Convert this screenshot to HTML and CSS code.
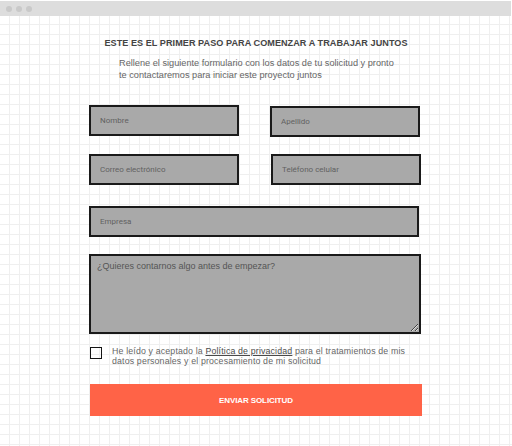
FILE: index.html
```html
<!DOCTYPE html>
<html lang="es">
<head>
<meta charset="utf-8">
<title>Formulario</title>
<link rel="stylesheet" href="styles.css">
</head>
<body>
<div class="window">
  <div class="titlebar">
    <span class="dot"></span><span class="dot"></span><span class="dot"></span>
  </div>
  <main class="content">
    <h1 class="title">ESTE ES EL PRIMER PASO PARA COMENZAR A TRABAJAR JUNTOS</h1>
    <p class="intro">Rellene el siguiente formulario con los datos de tu solicitud y pronto<br>te contactaremos para iniciar este proyecto juntos</p>
    <form class="form">
      <div class="pair">
        <input class="field" type="text" placeholder="Nombre">
        <input class="field field-low" type="text" placeholder="Apellido">
      </div>
      <div class="pair pair-second">
        <input class="field" type="email" placeholder="Correo electrónico">
        <input class="field" type="tel" placeholder="Teléfono celular">
      </div>
      <input class="field field-wide" type="text" placeholder="Empresa">
      <textarea class="message" placeholder="¿Quieres contarnos algo antes de empezar?"></textarea>
      <label class="consent">
        <span class="box"></span>
        <span class="consent-text">He leído y aceptado la <a class="policy" href="#">Política de privacidad</a> para el tratamientos de mis datos personales y el procesamiento de mi solicitud</span>
      </label>
      <button class="submit" type="button">ENVIAR SOLICITUD</button>
    </form>
  </main>
</div>
</body>
</html>
```

FILE: styles.css
```css
html, body {
  margin: 0;
  padding: 0;
  background: #fff;
}

.window {
  width: 512px;
  height: 446px;
  display: flex;
  flex-direction: column;
  overflow: hidden;
  font-family: "Liberation Sans", Arial, sans-serif;
}

.titlebar {
  height: 15px;
  margin-top: 1px;
  margin-right: 1px;
  background: #dddddd;
  display: flex;
  align-items: center;
  gap: 4px;
  padding-left: 6px;
  flex-shrink: 0;
}

.dot {
  width: 6px;
  height: 6px;
  border-radius: 50%;
  background: #c9c9c9;
}

.content {
  flex: 1;
  padding-top: 21px;
  background-color: #fff;
  background-image:
    linear-gradient(to right, #efefef 1px, transparent 1px),
    linear-gradient(to bottom, #efefef 1px, transparent 1px);
  background-size: 10px 10px;
  background-position: 9px 8px;
}

.title {
  margin: 0;
  font-size: 9.1px;
  line-height: 12px;
  font-weight: bold;
  color: #444;
  text-align: center;
  letter-spacing: 0.05px;
}

.intro {
  margin: 8px 0 0 119px;
  font-size: 9.2px;
  line-height: 12px;
  color: #666;
}

.form {
  margin: 24px 0 0 89px;
  width: 332px;
  display: flex;
  flex-direction: column;
}

.pair {
  display: flex;
  justify-content: space-between;
  align-items: flex-start;
}

.pair-second {
  margin-top: 17px;
}

.field {
  box-sizing: border-box;
  width: 150px;
  height: 31px;
  margin: 0;
  border: 2px solid #1a1a1a;
  background: #a9a9a9;
  padding: 0 0 0 9px;
  font-family: Roboto, "Liberation Sans", sans-serif;
  font-size: 8px;
  color: #333;
  outline: none;
}

.field::placeholder {
  color: #616161;
}

.field-low {
  margin-top: 1px;
  margin-right: 1px;
}

.field-wide {
  width: 330px;
  margin-top: 21px;
}

.message {
  box-sizing: border-box;
  width: 332px;
  height: 80px;
  margin: 17px 0 0 0;
  border: 2px solid #1a1a1a;
  background: #a9a9a9;
  padding: 4px 6px;
  font-family: "Liberation Sans", Arial, sans-serif;
  font-size: 9px;
  line-height: 12px;
  color: #333;
  outline: none;
  resize: both;
}

.message::placeholder {
  color: #555;
}

.consent {
  display: flex;
  align-items: flex-start;
  gap: 10px;
  margin-top: 12px;
  padding-left: 1px;
}

.box {
  box-sizing: border-box;
  width: 12px;
  height: 12px;
  border: 1.5px solid #141414;
  flex-shrink: 0;
  margin-top: 1px;
}

.consent-text {
  font-size: 8.8px;
  line-height: 10px;
  color: #666;
  letter-spacing: 0.15px;
  width: 310px;
}

.policy {
  color: #4a4a4a;
  text-decoration: underline;
}

.submit {
  margin: 18px 0 0 1px;
  width: 332px;
  height: 32px;
  border: none;
  background: #ff6347;
  color: #fff;
  font-family: "Liberation Sans", Arial, sans-serif;
  font-size: 8px;
  font-weight: bold;
  letter-spacing: -0.1px;
  padding: 0;
  cursor: pointer;
}
```
